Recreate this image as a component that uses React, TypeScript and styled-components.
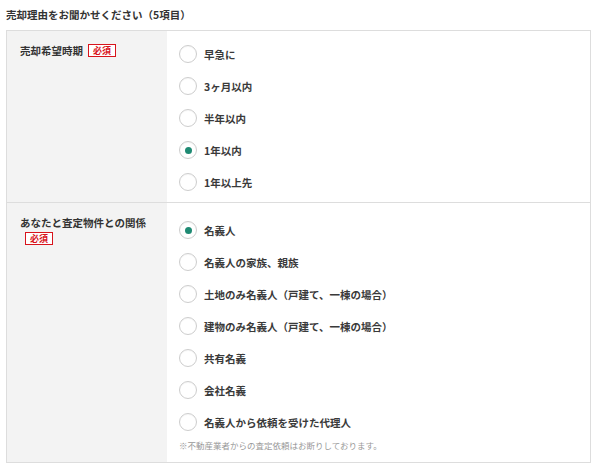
import React, { useState } from "react";
import styled, { createGlobalStyle } from "styled-components";

const GlobalStyle = createGlobalStyle`
  body {
    margin: 0;
    background: #fff;
    font-family: "Noto Sans CJK JP", "Noto Sans", sans-serif;
    color: #333;
  }
`;

const Page = styled.div`
  padding: 7px 9px 0 6px;
`;
const Title = styled.h2`
  margin: 0 0 7px;
  font-size: 10.5px;
  line-height: 16px;
  font-weight: 700;
  color: #333;
`;
const Table = styled.div`
  border: 1px solid #ddd;
  width: 583px;
`;
const Row = styled.div`
  display: grid;
  grid-template-columns: 160px 1fr;
  & + & {
    border-top: 1px solid #ddd;
  }
`;
const Head = styled.div`
  background: #f3f3f3;
  padding: 12px 10px 0 13px;
  font-size: 10.5px;
  line-height: 16px;
  font-weight: 700;
  color: #333;
`;
const Badge = styled.span`
  display: inline-block;
  margin-left: 5px;
  padding: 0 4px;
  border: 1px solid #d8141c;
  background: #fff;
  color: #d8141c;
  font-size: 9px;
  line-height: 11px;
  font-weight: 700;
  vertical-align: 1px;
`;
const Options = styled.div<{ $top: number; $bottom: number }>`
  padding: ${(p) => p.$top}px 12px ${(p) => p.$bottom}px 12px;
`;
const Option = styled.label`
  display: flex;
  align-items: center;
  height: 32px;
  gap: 7px;
  cursor: pointer;
  font-size: 10.5px;
  font-weight: 700;
  color: #3a3a3a;
`;
const Radio = styled.span<{ $checked: boolean }>`
  box-sizing: border-box;
  width: 18px;
  height: 18px;
  border-radius: 50%;
  border: 1.5px solid #cdcdcd;
  background: #fff;
  box-shadow: inset 0 1px 1px rgba(0, 0, 0, 0.04);
  display: flex;
  align-items: center;
  justify-content: center;
  &::after {
    content: "";
    width: 7px;
    height: 7px;
    border-radius: 50%;
    background: ${(p) => (p.$checked ? "#1f8a73" : "transparent")};
  }
`;
const Note = styled.p`
  margin: 0;
  font-size: 8.5px;
  line-height: 14px;
  color: #999;
`;

const timing = ["早急に", "3ヶ月以内", "半年以内", "1年以内", "1年以上先"];
const relation = [
  "名義人",
  "名義人の家族、親族",
  "土地のみ名義人（戸建て、一棟の場合）",
  "建物のみ名義人（戸建て、一棟の場合）",
  "共有名義",
  "会社名義",
  "名義人から依頼を受けた代理人",
];

const App = () => {
  const [when, setWhen] = useState("1年以内");
  const [who, setWho] = useState("名義人");

  return (
    <Page>
      <GlobalStyle />
      <Title>売却理由をお聞かせください（5項目）</Title>
      <Table>
        <Row>
          <Head>
            売却希望時期<Badge>必須</Badge>
          </Head>
          <Options $top={7} $bottom={4}>
            {timing.map((t) => (
              <Option key={t} onClick={() => setWhen(t)}>
                <Radio $checked={when === t} />
                {t}
              </Option>
            ))}
          </Options>
        </Row>
        <Row>
          <Head>
            あなたと査定物件との関係
            <br />
            <Badge>必須</Badge>
          </Head>
          <Options $top={11} $bottom={10}>
            {relation.map((t) => (
              <Option key={t} onClick={() => setWho(t)}>
                <Radio $checked={who === t} />
                {t}
              </Option>
            ))}
            <Note>※不動産業者からの査定依頼はお断りしております。</Note>
          </Options>
        </Row>
      </Table>
    </Page>
  );
};
export default App;
